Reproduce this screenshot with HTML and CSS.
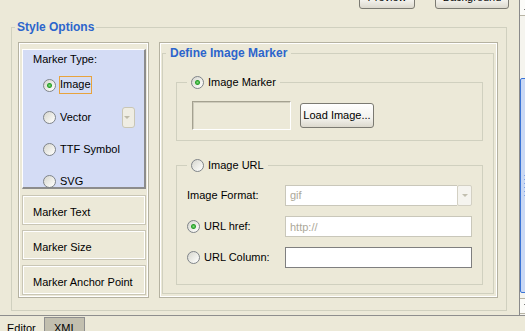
FILE: index.html
```html
<!DOCTYPE html>
<html lang="en">
<head>
  <meta charset="UTF-8">
  <title>Style Options</title>
  <link rel="stylesheet" href="styles.css">
</head>
<body>

  <div class="window">
    <div class="content">

      <!-- Botones de arriba (cortados por el borde) -->
      <div class="toolbar">
        <button class="btn btn-preview">Preview</button>
        <button class="btn btn-background">Background</button>
      </div>

      <fieldset class="group options">
        <legend>Style Options</legend>

        <div class="options-body">

          <!-- Lista de secciones -->
          <div class="sections">
            <div class="section section-open">
              <div class="section-title">Marker Type:</div>
              <div class="choices">
                <label class="choice"><input type="radio" class="radio" name="marker-type" checked><span class="focus">Image</span></label>
                <label class="choice"><input type="radio" class="radio" name="marker-type"><span>Vector</span><span class="mini-combo"><span class="arrow"></span></span></label>
                <label class="choice"><input type="radio" class="radio" name="marker-type"><span>TTF Symbol</span></label>
                <label class="choice"><input type="radio" class="radio" name="marker-type"><span>SVG</span></label>
              </div>
            </div>
            <div class="section">Marker Text</div>
            <div class="section">Marker Size</div>
            <div class="section">Marker Anchor Point</div>
          </div>

          <!-- Panel derecho -->
          <div class="panel">
            <fieldset class="group define">
              <legend>Define Image Marker</legend>

              <fieldset class="sub">
                <legend><label class="choice"><input type="radio" class="radio" name="source" checked><span>Image Marker</span></label></legend>
                <div class="image-row">
                  <div class="preview-box"></div>
                  <button class="btn btn-load">Load Image...</button>
                </div>
              </fieldset>

              <fieldset class="sub sub-url">
                <legend><label class="choice"><input type="radio" class="radio" name="source"><span>Image URL</span></label></legend>
                <div class="url-grid">
                  <span>Image Format:</span>
                  <div class="combo">
                    <span class="combo-text">gif</span>
                    <span class="combo-btn"><span class="arrow"></span></span>
                  </div>

                  <label class="choice"><input type="radio" class="radio" name="url-kind" checked><span>URL href:</span></label>
                  <input type="text" class="field field-disabled" placeholder="http://">

                  <label class="choice"><input type="radio" class="radio" name="url-kind"><span>URL Column:</span></label>
                  <input type="text" class="field">
                </div>
              </fieldset>
            </fieldset>
          </div>

        </div>
      </fieldset>
    </div>

    <!-- Barra de desplazamiento -->
    <div class="scrollbar">
      <div class="scroll-btn"><span class="arrow-up"></span></div>
      <div class="track">
        <div class="thumb"><span class="grip"></span></div>
      </div>
      <div class="scroll-btn scroll-btn-down"><span class="arrow-down"></span></div>
    </div>
  </div>

  <!-- Pestañas -->
  <div class="tabs">
    <div class="tab tab-active">Editor</div>
    <div class="tab tab-other">XMI</div>
  </div>

</body>
</html>
```

FILE: styles.css
```css
* {
  box-sizing: border-box;
}

body {
  margin: 0;
  width: 525px;
  height: 331px;
  overflow: hidden;
  background: #ece9d8;
  font-family: "Liberation Sans", Arial, sans-serif;
  font-size: 11px;
  line-height: 13px;
  color: #000;
}

.window {
  display: flex;
  height: 315px;
}

.content {
  width: 519px;
  flex: none;
}

/* Botones superiores */
.toolbar {
  height: 9px;
  display: flex;
  justify-content: flex-end;
  align-items: flex-end;
  gap: 20px;
  padding-right: 10px;
}

.btn {
  height: 23px;
  padding: 0;
  border: 1px solid #7b7a72;
  border-radius: 3px;
  background: linear-gradient(#ffffff, #f4f3ee 60%, #dcd9ce);
  font: inherit;
  color: #000;
  flex: none;
}

.btn-preview {
  width: 56px;
}

.btn-background {
  width: 74px;
}

.btn-load {
  width: 74px;
  height: 25px;
}

/* Cajas de grupo */
.group {
  margin: 0;
  min-width: 0;
  border: 1px solid #d0d0bf;
}

.group > legend {
  padding: 0 2px;
  font-size: 12px;
  line-height: 14px;
  font-weight: bold;
  color: #2c65cc;
}

.options {
  margin: 11px 12px 0 11px;
  padding: 8px 8px 12px 6px;
}

.options > legend {
  margin-left: -3px;
}

.options-body {
  display: flex;
  gap: 10px;
}

/* Lista de secciones */
.sections {
  width: 131px;
  flex: none;
  display: flex;
  flex-direction: column;
  gap: 5px;
  padding: 6px 2px 2px 3px;
  border: 1px solid #b5b2a1;
  box-shadow: inset 1px 1px #fff, inset -1px -1px #fff;
}

.section {
  height: 30px;
  padding: 10px 0 0 10px;
  border: 1px solid #c9c6b5;
  box-shadow: inset 1px 1px #fff, inset -1px -1px #fff;
}

.section-open {
  height: 140px;
  margin-bottom: 1px;
  padding: 3px 0 0 10px;
  background: #d4dcf5;
  border-style: solid;
  border-width: 1px 2px 2px 1px;
  border-color: #fff #8c8c8c #8c8c8c #fff;
  box-shadow: none;
}

.choices {
  display: flex;
  flex-direction: column;
  gap: 12px;
  margin-top: 9px;
  padding-left: 10px;
}

.choice {
  height: 20px;
  display: flex;
  align-items: center;
  gap: 4px;
  font-weight: normal;
  font-size: 11px;
  color: #000;
}

.focus {
  margin-left: -1px;
  padding: 1px 0 2px;
  border: 1px solid #e8a33d;
}

.mini-combo {
  width: 13px;
  height: 21px;
  margin-left: auto;
  margin-right: 9px;
  display: flex;
  align-items: center;
  padding-left: 1px;
  border: 1px solid #c9c6b5;
  border-radius: 3px;
  background: #efede3;
}

.arrow {
  width: 0;
  height: 0;
  border-left: 3px solid transparent;
  border-right: 3px solid transparent;
  border-top: 3px solid #bdbaa9;
}

/* Radios estilo XP */
.radio {
  -webkit-appearance: none;
  appearance: none;
  width: 13px;
  height: 13px;
  margin: 0;
  flex: none;
  border: 1px solid #7f8489;
  border-radius: 50%;
  background: linear-gradient(135deg, #d6d6ce, #f4f4f0 70%, #fff);
}

.radio:checked {
  background: radial-gradient(circle, #7ee07e 0, #2b9f2b 2px, transparent 3px),
              linear-gradient(135deg, #d6d6ce, #f4f4f0 70%, #fff);
}

/* Panel derecho */
.panel {
  flex: 1;
  padding: 3px 3px 3px 2px;
  border: 1px solid #b5b2a1;
  box-shadow: inset 1px 1px #fff, inset -1px -1px #fff;
}

.define {
  padding: 12px 10px 8px 13px;
}

.define > legend {
  margin-left: -10px;
  padding: 0 4px;
}

.sub {
  margin: 0;
  min-width: 0;
  padding: 9px 10px 10px;
  border: 1px solid #d0d0bf;
}

.sub > legend {
  padding: 0 4px;
}

.sub-url {
  margin-top: 14px;
  padding: 10px 10px 16px;
}

.image-row {
  display: flex;
  align-items: center;
  gap: 9px;
  margin-left: 5px;
}

.preview-box {
  width: 99px;
  height: 29px;
  border: 1px solid;
  border-color: #a4a190 #fff #fff #a4a190;
  box-shadow: inset 1px 1px #cfccbc;
}

.url-grid {
  display: grid;
  grid-template-columns: 98px 1fr;
  grid-auto-rows: 21px;
  row-gap: 10px;
  align-items: center;
}

.combo {
  height: 21px;
  display: flex;
}

.combo-text {
  flex: 1;
  padding-left: 4px;
  line-height: 19px;
  color: #aca899;
  background: #fff;
  border: 1px solid #c9c7ba;
  border-right: 0;
}

.combo-btn {
  width: 15px;
  display: flex;
  align-items: center;
  justify-content: center;
  border: 1px solid #d3d0c3;
  border-radius: 2px;
  background: #f5f4ef;
}

.combo-btn .arrow {
  border-top-color: #c2bfb0;
}

.field {
  height: 21px;
  margin: 0;
  padding: 0 4px;
  border: 1px solid #7f7f7f;
  background: #fff;
  font: inherit;
  outline: none;
}

.field-disabled {
  border-color: #c9c7ba;
}

.field::placeholder {
  color: #aca899;
}

/* Barra de desplazamiento */
.scrollbar {
  width: 17px;
  flex: none;
  display: flex;
  flex-direction: column;
  border-left: 1px solid #8a8a8a;
  background: #f5f4ee;
}

.scroll-btn {
  height: 16px;
  flex: none;
  display: flex;
  align-items: center;
  justify-content: center;
  border-bottom: 1px solid #b7b4a4;
  background: #fbfbf8;
}

.scroll-btn-down {
  margin-bottom: 1px;
  border-top: 1px solid #b7b4a4;
}

.arrow-up {
  border-left: 4px solid transparent;
  border-right: 4px solid transparent;
  border-bottom: 4px solid #000;
}

.arrow-down {
  border-left: 4px solid transparent;
  border-right: 4px solid transparent;
  border-top: 4px solid #000;
}

.track {
  flex: 1;
  padding-top: 62px;
}

.thumb {
  height: 215px;
  display: flex;
  align-items: center;
  justify-content: center;
  border: 1px solid #3a74d6;
  border-radius: 2px;
  background: #c9d8f4;
}

.grip {
  width: 8px;
  height: 22px;
  background: repeating-linear-gradient(#7fa3e8 0 1px, transparent 1px 4px);
}

/* Pestañas inferiores */
.tabs {
  display: flex;
  height: 16px;
  border-top: 1px solid #8e8e8e;
}

.tab {
  padding: 6px 0 0 7px;
}

.tab-active {
  width: 44px;
}

.tab-other {
  width: 41px;
  margin-top: 1px;
  padding: 4px 0 0 9px;
  background: #c2bfaf;
  border: 1px solid #8e8e8e;
  border-bottom: 0;
}
```
